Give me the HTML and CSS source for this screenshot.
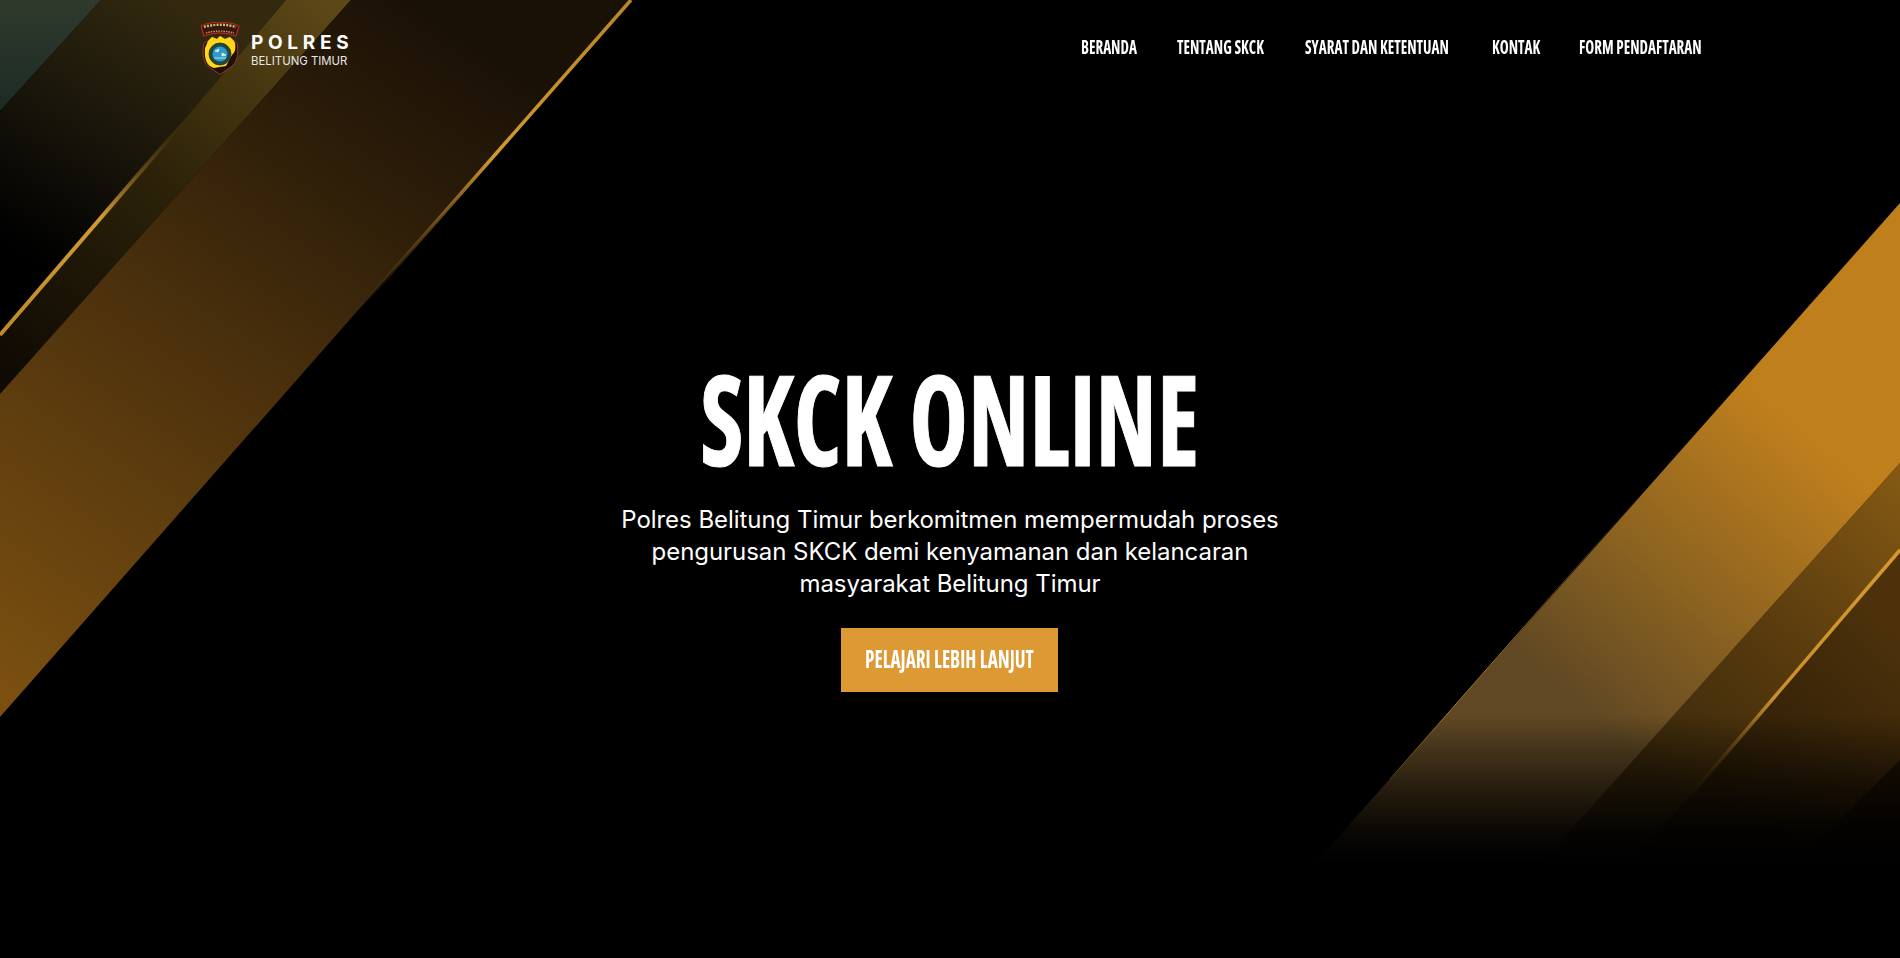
FILE: index.html
```html
<!DOCTYPE html>
<html lang="id">
<head>
  <meta charset="UTF-8">
  <title>SKCK Online - Polres Belitung Timur</title>
  <link rel="stylesheet" href="styles.css">
</head>
<body>
  <svg class="backdrop" viewBox="0 0 1900 958" aria-hidden="true">
    <defs>
      <linearGradient id="leftCorner" gradientUnits="userSpaceOnUse" x1="40" y1="110" x2="40" y2="0">
        <stop offset="0" stop-color="#1d2b25"/>
        <stop offset="1" stop-color="#2f3a2c"/>
      </linearGradient>
      <linearGradient id="leftDark" gradientUnits="userSpaceOnUse" x1="40" y1="260" x2="190" y2="10">
        <stop offset="0" stop-color="#000"/>
        <stop offset="0.45" stop-color="#17140a"/>
        <stop offset="1" stop-color="#33290f"/>
      </linearGradient>
      <linearGradient id="leftStrip" gradientUnits="userSpaceOnUse" x1="0" y1="365" x2="320" y2="0">
        <stop offset="0" stop-color="#0f0a03"/>
        <stop offset="0.5" stop-color="#2c2209"/>
        <stop offset="1" stop-color="#5c4716"/>
      </linearGradient>
      <linearGradient id="leftBand" gradientUnits="userSpaceOnUse" x1="20" y1="690" x2="470" y2="30">
        <stop offset="0" stop-color="#7a4f10"/>
        <stop offset="0.45" stop-color="#4f330d"/>
        <stop offset="0.75" stop-color="#2f1f09"/>
        <stop offset="1" stop-color="#191006"/>
      </linearGradient>
      <linearGradient id="streakOne" gradientUnits="userSpaceOnUse" x1="631" y1="0" x2="355" y2="314">
        <stop offset="0" stop-color="#b9852a"/>
        <stop offset="0.5" stop-color="#d0982f"/>
        <stop offset="1" stop-color="#6b4a12" stop-opacity="0"/>
      </linearGradient>
      <linearGradient id="streakTwo" gradientUnits="userSpaceOnUse" x1="0" y1="335" x2="185" y2="120">
        <stop offset="0" stop-color="#c08a2a"/>
        <stop offset="0.55" stop-color="#d09a34"/>
        <stop offset="1" stop-color="#5a4216" stop-opacity="0"/>
      </linearGradient>
      <linearGradient id="rightBand" gradientUnits="userSpaceOnUse" x1="1790" y1="420" x2="1560" y2="690">
        <stop offset="0" stop-color="#c07f1d"/>
        <stop offset="0.55" stop-color="#8c6320"/>
        <stop offset="1" stop-color="#604824"/>
      </linearGradient>
      <linearGradient id="rightBandTwo" gradientUnits="userSpaceOnUse" x1="1900" y1="480" x2="1640" y2="760">
        <stop offset="0" stop-color="#835813"/>
        <stop offset="0.5" stop-color="#5a3c0e"/>
        <stop offset="1" stop-color="#3a280b"/>
      </linearGradient>
      <linearGradient id="rightBandThree" gradientUnits="userSpaceOnUse" x1="1880" y1="620" x2="1720" y2="800">
        <stop offset="0" stop-color="#4c310b"/>
        <stop offset="1" stop-color="#291a06"/>
      </linearGradient>
      <linearGradient id="streakThree" gradientUnits="userSpaceOnUse" x1="1900" y1="550" x2="1690" y2="796">
        <stop offset="0" stop-color="#d79a2e"/>
        <stop offset="0.6" stop-color="#c98f2c"/>
        <stop offset="1" stop-color="#6b4a14" stop-opacity="0.2"/>
      </linearGradient>
      <linearGradient id="edgeLine" gradientUnits="userSpaceOnUse" x1="1640" y1="495" x2="1390" y2="779">
        <stop offset="0" stop-color="#a87a22" stop-opacity="0"/>
        <stop offset="0.6" stop-color="#a87a22"/>
        <stop offset="1" stop-color="#a87a22"/>
      </linearGradient>
      <linearGradient id="bottomFade" x1="0" y1="0" x2="0" y2="1">
        <stop offset="0" stop-color="#000" stop-opacity="0"/>
        <stop offset="0.5" stop-color="#000" stop-opacity="0.6"/>
        <stop offset="0.8" stop-color="#000" stop-opacity="0.9"/>
        <stop offset="1" stop-color="#000"/>
      </linearGradient>
    </defs>

    <polygon points="0,0 101,0 0,111" fill="url(#leftCorner)"/>
    <polygon points="101,0 286,0 0,335 0,111" fill="url(#leftDark)"/>
    <polygon points="286,0 351,0 0,394 0,335" fill="url(#leftStrip)"/>
    <polygon points="351,0 631,0 0,717 0,394" fill="url(#leftBand)"/>
    <line class="streak" x1="631" y1="0" x2="355" y2="314" stroke="url(#streakOne)" stroke-width="3.5"/>
    <line class="streak" x1="0" y1="335" x2="185" y2="120" stroke="url(#streakTwo)" stroke-width="4"/>

    <polygon points="1900,760 1900,860 1800,860" fill="#1e1204"/>
    <polygon points="1900,550 1900,760 1800,860 1635,860" fill="url(#rightBandThree)"/>
    <polygon points="1900,463 1900,550 1635,860 1544,860" fill="url(#rightBandTwo)"/>
    <polygon points="1900,203 1900,463 1544,860 1318,860" fill="url(#rightBand)"/>
    <line x1="1640" y1="495" x2="1390" y2="779" stroke="url(#edgeLine)" stroke-width="1"/>
    <line class="streak" x1="1900" y1="550" x2="1690" y2="796" stroke="url(#streakThree)" stroke-width="3.5"/>
    <rect x="1200" y="715" width="700" height="146" fill="url(#bottomFade)"/>
  </svg>

  <header class="topbar">
    <a class="brand" href="#">
      <svg class="brand-logo" viewBox="0 0 40 53" aria-hidden="true">
        <path d="M1 4 C11 -1 29 -1 39 4 L36 14 C26 10 14 10 4 14 Z" fill="#3a1512" stroke="#b32a1e" stroke-width="1.2"/>
        <path d="M4 5 C13 2 27 2 36 5" stroke="#c9c06a" stroke-width="2.4" stroke-dasharray="2 1.2" fill="none"/>
        <path d="M6 11 C14 8.5 26 8.5 34 11" stroke="#b9a25a" stroke-width="1.4" stroke-dasharray="1.5 1" fill="none"/>
        <path d="M8 19 L12 15 L17 17 L20 14 L25 17 L30 15 L34 19 L37 21 C39 32 37 41 31 45 L20 52.5 L9 45 C3 41 2 31 4 21 Z" fill="#1f100e" stroke="#a33a2a" stroke-width="0.9"/>
        <path d="M8 19 L12 15 L17 17 L20 14 L25 17 L30 15 L34 19 L35 21 C36 27 35 30 32 33 L26 44 L14 46 C7 44 4 38 5 26 Z" fill="#ffd816"/>
        <circle cx="20" cy="32" r="11" fill="#1d4a45" stroke="#3a2a12" stroke-width="0.8"/>
        <circle cx="20" cy="32" r="7.5" fill="#2a9bd3"/>
        <path d="M15 29 L19 27 L18 30 Z M22 31 L26 33 L22 34 Z M14 36 H26" stroke="#e7f0d0" stroke-width="0.8" fill="#e7f0d0"/>
      </svg>
      <span class="brand-text">
        <span class="brand-name">POLRES</span>
        <span class="brand-sub">BELITUNG TIMUR</span>
      </span>
    </a>
    <nav class="menu">
      <a href="#"><span>BERANDA</span></a>
      <a href="#"><span>TENTANG SKCK</span></a>
      <a href="#"><span>SYARAT DAN KETENTUAN</span></a>
      <a href="#"><span>KONTAK</span></a>
      <a href="#"><span>FORM PENDAFTARAN</span></a>
    </nav>
  </header>

  <main class="hero">
    <h1><span>SKCK ONLINE</span></h1>
    <p>Polres Belitung Timur berkomitmen mempermudah proses pengurusan SKCK demi kenyamanan dan kelancaran masyarakat Belitung Timur</p>
    <a class="cta" href="#"><span>PELAJARI LEBIH LANJUT</span></a>
  </main>
</body>
</html>
```
FILE: styles.css
```css
* { box-sizing: border-box; }
html, body { height: 100%; }
body { margin: 0; background: #000; color: #fff; font-family: "Inter", sans-serif; overflow: hidden; position: relative; }
a { color: #fff; text-decoration: none; }

/* diagonal gold shapes sit behind everything */
.backdrop { position: absolute; top: 0; left: 0; width: 1900px; height: 958px; display: block; }
.streak { filter: blur(0.7px); }

.topbar { position: relative; width: 1502px; margin: 0 auto; padding: 22px 0 0 1px; display: flex; justify-content: space-between; align-items: flex-start; }
.brand { display: flex; gap: 11px; align-items: center; }
.brand-logo { width: 40px; height: 53px; display: block; }
.brand-text { display: flex; flex-direction: column; padding-top: 1px; }
.brand-name { font-size: 19px; font-weight: 700; letter-spacing: 4.7px; line-height: 23px; }
.brand-sub { font-size: 11.4px; line-height: 14px; color: #e8e8e8; }

/* no condensed display font here, so the text is squeezed sideways */
.menu { display: grid; grid-template-columns: 56px 88px 147px 47px 122px; column-gap: 40px; padding-top: 13px; }
.menu a { display: block; white-space: nowrap; font-family: "Open Sans", sans-serif; font-stretch: 75%; font-weight: 700; font-size: 20px; line-height: 24px; }
.menu span { display: inline-block; transform: scaleX(0.755); transform-origin: left center; }

.hero { position: relative; padding-top: 279px; display: flex; flex-direction: column; align-items: center; text-align: center; }
.hero h1 { margin: 0 0 24px; font-family: "Open Sans", sans-serif; font-stretch: 75%; font-weight: 700; font-size: 126px; line-height: 1; white-space: nowrap; -webkit-text-stroke: 1px #fff; }
.hero h1 span { display: inline-block; transform: scaleX(0.783); }
.hero p { margin: 0 0 28px; width: 700px; font-size: 24px; line-height: 32px; letter-spacing: -0.05px; }
.cta { display: flex; justify-content: center; align-items: center; width: 217px; height: 64px; margin-right: 1px; padding-bottom: 3px; background: #dd9933; font-family: "Open Sans", sans-serif; font-stretch: 75%; font-weight: 700; font-size: 24px; white-space: nowrap; }
.cta span { display: inline-block; transform: scaleX(0.8); }
```
